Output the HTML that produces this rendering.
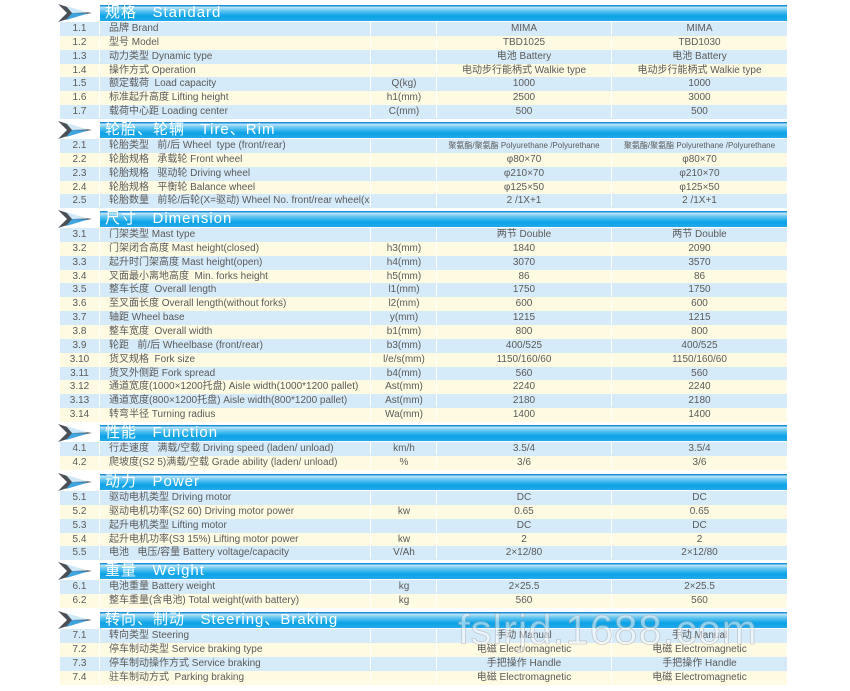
<!DOCTYPE html><html><head><meta charset="utf-8"><style>
body{margin:0;width:850px;height:691px;background:#fff;position:relative;overflow:hidden;font-family:"Liberation Sans","Noto Sans CJK SC",sans-serif;}
.h{position:absolute;left:100px;width:687px;height:16px;background:linear-gradient(#1a8fd6 0,#1a8fd6 1px,#bfe6fa 2px,#5cc3f0 6px,#0aa2e6 11px,#23a9e8 16px);color:#fff;font-size:15px;line-height:16px;letter-spacing:1px;padding-left:5px;box-sizing:border-box;white-space:pre}
.ar{position:absolute;left:58px;width:36px;height:18px}
.r{position:absolute;left:60px;width:727px;height:14px;font-size:10px;line-height:14px;color:#5a5a5a;}
.r span{position:absolute;top:0;height:13px;border-right:1px solid #fff;white-space:pre;overflow:hidden}
.b{background:#d6ebf9}.y{background:#fffbe2}
.c1{left:0;width:39px;text-align:center}
.c2{left:40px;width:271px;padding-left:9px;box-sizing:border-box}
.c3{left:312px;width:64px;text-align:center}
.c4{left:377px;width:174px;text-align:center}
.c5{left:552px;width:175px;text-align:center;border-right:none!important}
.wm{position:absolute;left:458px;top:606px;font-size:42px;color:rgba(255,255,255,0.5);-webkit-text-stroke:0.8px rgba(160,160,160,0.5);letter-spacing:1px;font-family:"Liberation Sans",sans-serif}
</style></head><body>
<div id="c"></div>
<div class="wm">fslrjd.1688.com</div>
<script>
var svg='<svg class="ar" viewBox="0 0 36 18" style="top:TOPpx"><polygon points="0,0 22,7 34,9 22,11 0,18 9,9" fill="#4a4f55"/><polygon points="8,2 30,8.5 14,9" fill="#cfe8f7"/><polygon points="14,9 30,9.5 8,16" fill="#3fa3dd"/></svg>';
var S=[[4,"规格   Standard",[
["1.1","品牌 Brand","","MIMA","MIMA"],["1.2","型号 Model","","TBD1025","TBD1030"],["1.3","动力类型 Dynamic type","","电池 Battery","电池 Battery"],["1.4","操作方式 Operation","","电动步行能柄式 Walkie type","电动步行能柄式 Walkie type"],["1.5","额定载荷  Load capacity","Q(kg)","1000","1000"],["1.6","标准起升高度 Lifting height","h1(mm)","2500","3000"],["1.7","载荷中心距 Loading center","C(mm)","500","500"]]],
[121,"轮胎、轮辆   Tire、Rim",[
["2.1","轮胎类型   前/后 Wheel  type (front/rear)","","<small style='font-size:8px'>聚氨酯/聚氨酯 Polyurethane /Polyurethane</small>","<small style='font-size:8px'>聚氨酯/聚氨酯 Polyurethane /Polyurethane</small>"],["2.2","轮胎规格   承载轮 Front wheel","","φ80×70","φ80×70"],["2.3","轮胎规格   驱动轮 Driving wheel","","φ210×70","φ210×70"],["2.4","轮胎规格   平衡轮 Balance wheel","","φ125×50","φ125×50"],["2.5","轮胎数量   前轮/后轮(X=驱动) Wheel No. front/rear wheel(x=drive wheel)","","2 /1X+1","2 /1X+1"]]],
[210,"尺寸   Dimension",[
["3.1","门架类型 Mast type","","两节 Double","两节 Double"],["3.2","门架闭合高度 Mast height(closed)","h3(mm)","1840","2090"],["3.3","起升时门架高度 Mast height(open)","h4(mm)","3070","3570"],["3.4","叉面最小离地高度  Min. forks height","h5(mm)","86","86"],["3.5","整车长度  Overall length","l1(mm)","1750","1750"],["3.6","至叉面长度 Overall length(without forks)","l2(mm)","600","600"],["3.7","轴距 Wheel base","y(mm)","1215","1215"],["3.8","整车宽度  Overall width","b1(mm)","800","800"],["3.9","轮距   前/后 Wheelbase (front/rear)","b3(mm)","400/525","400/525"],["3.10","货叉规格  Fork size","l/e/s(mm)","1150/160/60","1150/160/60"],["3.11","货叉外侧距 Fork spread","b4(mm)","560","560"],["3.12","通道宽度(1000×1200托盘) Aisle width(1000*1200 pallet)","Ast(mm)","2240","2240"],["3.13","通道宽度(800×1200托盘) Aisle width(800*1200 pallet)","Ast(mm)","2180","2180"],["3.14","转弯半径 Turning radius","Wa(mm)","1400","1400"]]],
[424,"性能   Function",[
["4.1","行走速度   满载/空载 Driving speed (laden/ unload)","km/h","3.5/4","3.5/4"],["4.2","爬坡度(S2 5)满载/空载 Grade ability (laden/ unload)","%","3/6","3/6"]]],
[473,"动力   Power",[
["5.1","驱动电机类型 Driving motor","","DC","DC"],["5.2","驱动电机功率(S2 60) Driving motor power","kw","0.65","0.65"],["5.3","起升电机类型 Lifting motor","","DC","DC"],["5.4","起升电机功率(S3 15%) Lifting motor power","kw","2","2"],["5.5","电池   电压/容量 Battery voltage/capacity","V/Ah","2×12/80","2×12/80"]]],
[562,"重量   Weight",[
["6.1","电池重量 Battery weight","kg","2×25.5","2×25.5"],["6.2","整车重量(含电池) Total weight(with battery)","kg","560","560"]]],
[611,"转向、制动   Steering、Braking",[
["7.1","转向类型 Steering","","手动 Manual","手动 Manual"],["7.2","停车制动类型 Service braking type","","电磁 Electromagnetic","电磁 Electromagnetic"],["7.3","停车制动操作方式 Service braking","","手把操作 Handle","手把操作 Handle"],["7.4","驻车制动方式  Parking braking","","电磁 Electromagnetic","电磁 Electromagnetic"]]]];
var h='';
S.forEach(function(s){var t=s[0];h+=svg.replace('TOP',t);h+='<div class="h" style="top:'+(t+1)+'px">'+s[1]+'</div>';
s[2].forEach(function(r,i){var y=t+18+Math.round(i*13.85);h+='<div class="r '+(i%2?'y':'b')+'" style="top:'+y+'px"><span class="c1">'+r[0]+'</span><span class="c2">'+r[1]+'</span><span class="c3">'+r[2]+'</span><span class="c4">'+r[3]+'</span><span class="c5">'+r[4]+'</span></div>';});});
document.getElementById('c').innerHTML=h;
</script>
</body></html>
